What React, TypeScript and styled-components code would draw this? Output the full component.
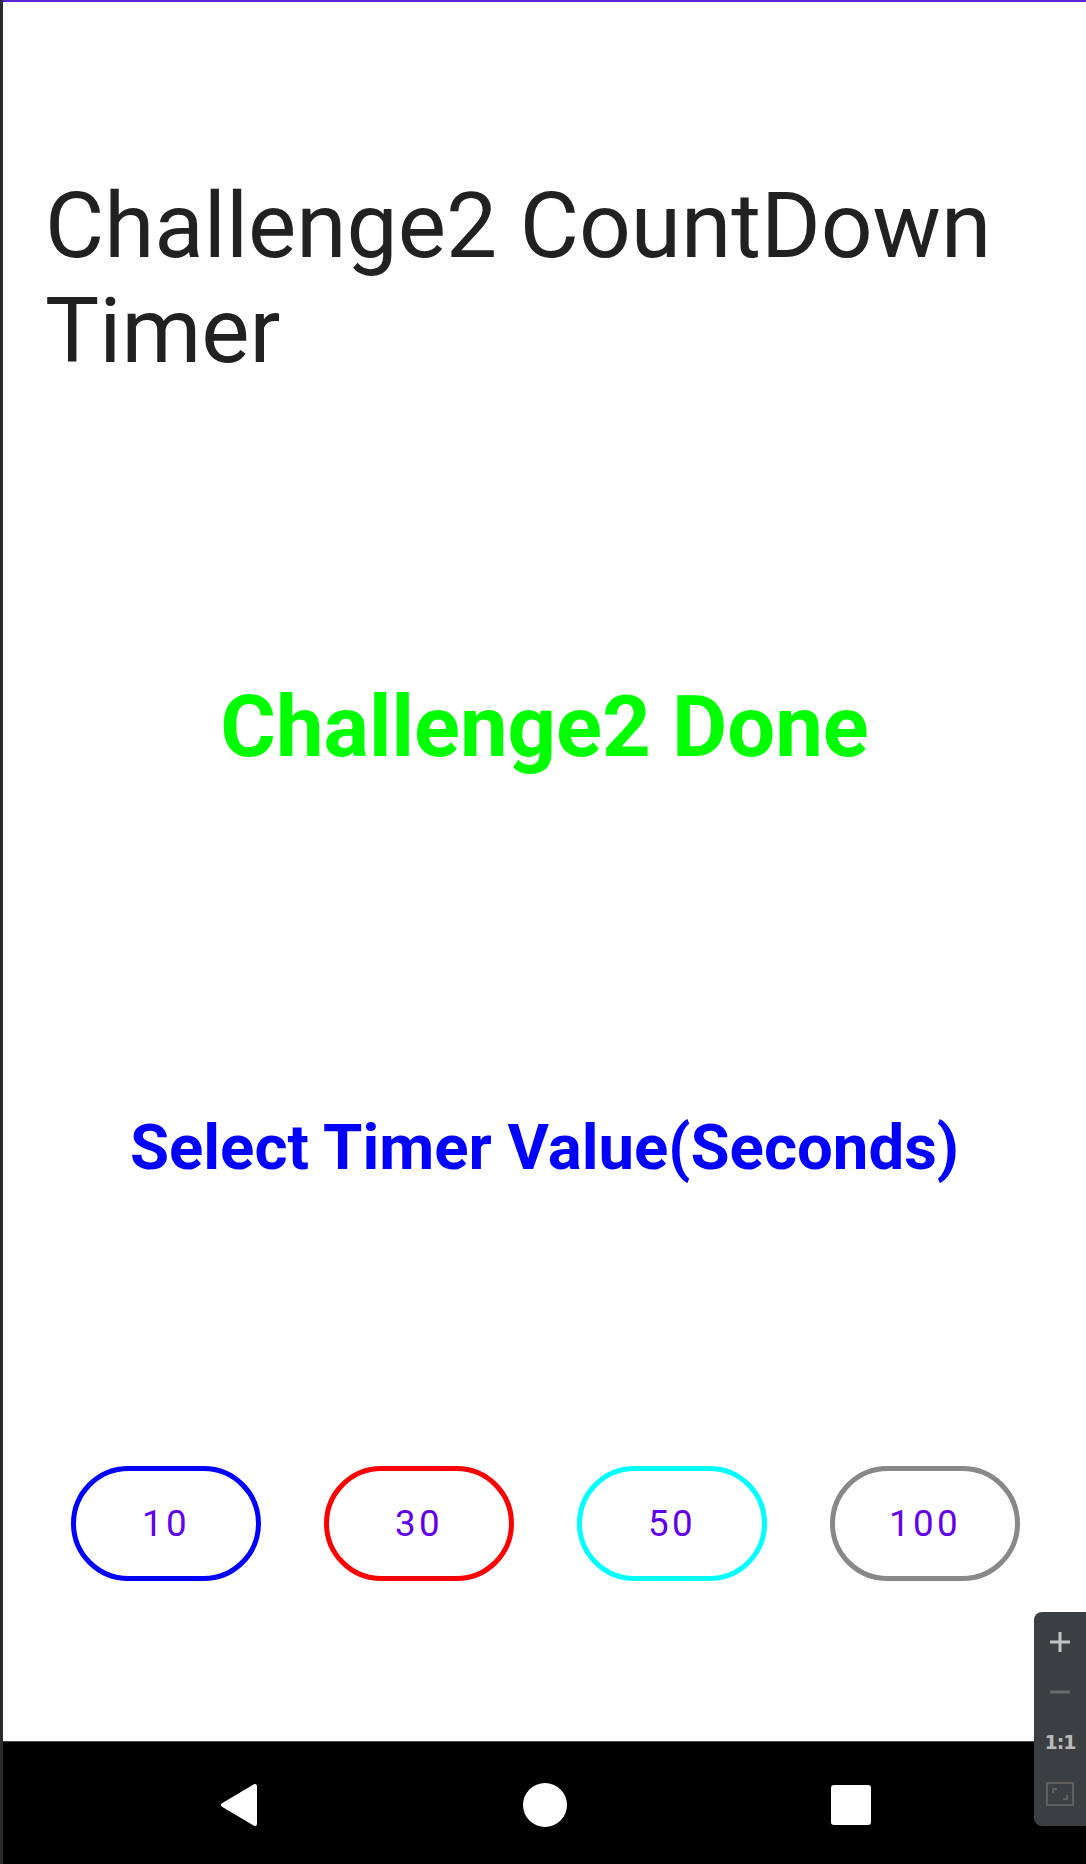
import React from "react";
import styled, { createGlobalStyle } from "styled-components";

const GlobalStyle = createGlobalStyle`
    html, body {
        margin: 0;
        padding: 0;
        background: #ffffff;
    }
    body {
        font-family: Roboto, "Noto Sans", "Liberation Sans", sans-serif;
    }
`;

const Frame = styled.div`
    position: relative;
    display: flex;
    width: 1086px;
    height: 1864px;
    overflow: hidden;
    border-left: 3px solid #2b2b2b;
    box-sizing: border-box;
`;

const Device = styled.div`
    flex: 1;
    display: flex;
    flex-direction: column;
    background: #ffffff;
`;

const StatusLine = styled.div`
    height: 2px;
    background: #5b24d6;
`;

const Content = styled.main`
    flex: 1;
    display: flex;
    flex-direction: column;
    padding: 0 42px;
`;

const Title = styled.h1`
    margin: 172px 0 0;
    font-family: Roboto, sans-serif;
    font-weight: 400;
    font-size: 91px;
    line-height: 105px;
    color: #212121;
`;

const Headline = styled.h2<{ $color: string; $size: number; $top: number }>`
    margin: ${(p) => p.$top}px 0 0;
    text-align: center;
    font-family: Roboto, sans-serif;
    font-weight: 700;
    font-size: ${(p) => p.$size}px;
    line-height: normal;
    color: ${(p) => p.$color};
`;

const ButtonRow = styled.div`
    display: flex;
    gap: 63px;
    margin: 281px 0 0 26px;
`;

const TimerButton = styled.button<{ $ring: string }>`
    display: flex;
    align-items: center;
    justify-content: center;
    flex: 0 0 190px;
    height: 115px;
    padding: 0;
    box-sizing: border-box;
    border: 5px solid ${(p) => p.$ring};
    border-radius: 58px;
    background: #ffffff;
    font-family: Roboto, sans-serif;
    font-weight: 400;
    font-size: 36.75px;
    letter-spacing: 3.3px;
    color: #6200ee;
    cursor: pointer;
`;

const NavBar = styled.nav`
    display: flex;
    justify-content: center;
    align-items: center;
    height: 123px;
    padding-top: 4px;
    box-sizing: border-box;
    background: #000000;
    border-top: 1px solid #4a4a4a;
`;

const NavSlot = styled.div`
    display: flex;
    justify-content: center;
    align-items: center;
    width: 306px;
`;

const ZoomPanel = styled.div`
    position: absolute;
    right: 0;
    top: 1612px;
    width: 52px;
    height: 214px;
    display: flex;
    flex-direction: column;
    align-items: center;
    gap: 30px;
    padding-top: 20px;
    box-sizing: border-box;
    background: #3c3f41;
    border-radius: 8px 0 0 8px;
`;

const OneToOne = styled.span`
    font-family: "DejaVu Sans", sans-serif;
    font-weight: 700;
    font-size: 19px;
    line-height: 20px;
    color: #b9b9b9;
    letter-spacing: -1px;
`;

const buttons = [
    { value: 10, ring: "#0000ff" },
    { value: 30, ring: "#ff0000" },
    { value: 50, ring: "#00ffff" },
    { value: 100, ring: "#888888" },
];

export default function App() {
    return (
        <>
            <GlobalStyle />
            <Frame>
                <Device>
                    <StatusLine />
                    <Content>
                        <Title>Challenge2 CountDown Timer</Title>
                        <Headline $color="#00ff00" $size={85} $top={293}>
                            Challenge2 Done
                        </Headline>
                        <Headline $color="#0000ff" $size={63.5} $top={333}>
                            Select Timer Value(Seconds)
                        </Headline>
                        <ButtonRow>
                            {buttons.map((b) => (
                                <TimerButton key={b.value} $ring={b.ring}>
                                    {b.value}
                                </TimerButton>
                            ))}
                        </ButtonRow>
                    </Content>
                    <NavBar>
                        <NavSlot>
                            <svg width="40" height="46" viewBox="0 0 40 46">
                                <path
                                    d="M36 4 L36 42 L4 23 Z"
                                    fill="#fff"
                                    stroke="#fff"
                                    strokeWidth="4"
                                    strokeLinejoin="round"
                                />
                            </svg>
                        </NavSlot>
                        <NavSlot>
                            <svg width="44" height="44" viewBox="0 0 44 44">
                                <circle cx="22" cy="22" r="22" fill="#fff" />
                            </svg>
                        </NavSlot>
                        <NavSlot>
                            <svg width="40" height="40" viewBox="0 0 40 40">
                                <rect x="0" y="0" width="40" height="40" rx="3" fill="#fff" />
                            </svg>
                        </NavSlot>
                    </NavBar>
                </Device>
                <ZoomPanel>
                    <svg width="20" height="20" viewBox="0 0 20 20">
                        <path d="M10 0 V20 M0 10 H20" stroke="#c4c4c4" strokeWidth="3" />
                    </svg>
                    <svg width="20" height="20" viewBox="0 0 20 20">
                        <path d="M0 10 H20" stroke="#6a6a6a" strokeWidth="3" />
                    </svg>
                    <OneToOne>1:1</OneToOne>
                    <svg width="28" height="24" viewBox="0 0 28 24">
                        <rect x="1" y="1" width="26" height="22" fill="none" stroke="#5e5e5e" strokeWidth="2" />
                        <path d="M7 11 V7 H11 M21 13 V17 H17" fill="none" stroke="#5e5e5e" strokeWidth="2" />
                    </svg>
                </ZoomPanel>
            </Frame>
        </>
    );
}
